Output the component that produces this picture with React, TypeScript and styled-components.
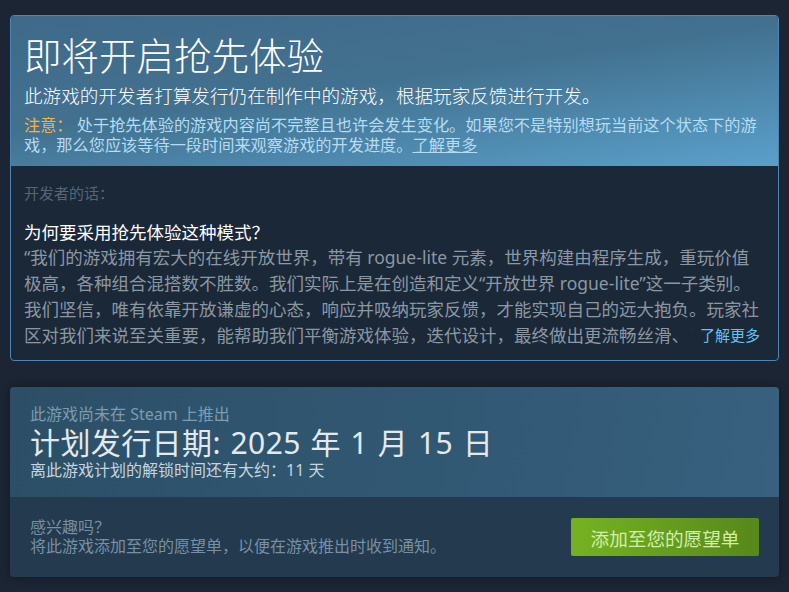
import React from "react";
import styled, { createGlobalStyle } from "styled-components";

const GlobalStyle = createGlobalStyle`
  html, body {
    margin: 0;
    padding: 0;
    background: #1b2534;
  }
  body {
    font-family: "Noto Sans", "Noto Sans CJK SC", sans-serif;
  }
`;

const Page = styled.div`
  width: 789px;
  height: 592px;
  box-sizing: border-box;
  padding: 15px 10px 0 10px;
  display: flex;
  flex-direction: column;
  gap: 26px;
  background: #1b2534;
`;

const EarlyAccessCard = styled.div`
  border: 1px solid #4b86b6;
  border-radius: 4px;
  overflow: hidden;
  background: #1b2838;
`;

const Header = styled.div`
  padding: 18px 14px 11px 13px;
  background: linear-gradient(172deg, #3f6a89 0%, #42718f 45%, #5aa0cb 100%);
`;

const Title = styled.h1`
  margin: 0;
  font-size: 37.5px;
  line-height: 44px;
  font-weight: 300;
  color: #ffffff;
`;

const Subtitle = styled.div`
  margin-top: 6px;
  font-size: 18.6px;
  line-height: 24px;
  font-weight: 300;
  color: #ffffff;
`;

const Note = styled.div`
  margin-top: 7px;
  font-size: 16.2px;
  line-height: 20px;
  color: #b5dcf2;
`;

const Warn = styled.span`
  color: #f3b535;
`;

const InlineLink = styled.a`
  color: #b5dcf2;
  text-decoration: underline;
  cursor: pointer;
`;

const DevSection = styled.div`
  padding: 17px 14px 12px 13px;
`;

const Label = styled.div`
  font-size: 15px;
  line-height: 20px;
  color: #566675;
`;

const Question = styled.div`
  margin-top: 17px;
  font-size: 17.5px;
  line-height: 24px;
  color: #ffffff;
`;

const Body = styled.div`
  position: relative;
  max-height: 104px;
  overflow: hidden;
  font-size: 17.5px;
  line-height: 26px;
  color: #8b97a3;
`;

const ReadMore = styled.a`
  position: absolute;
  right: 4px;
  bottom: 0;
  padding-left: 22px;
  font-size: 15px;
  line-height: 26px;
  color: #66c0f4;
  cursor: pointer;
  background: linear-gradient(to right, rgba(27, 40, 56, 0) 0%, #1b2838 14px);
`;

const ReleaseCard = styled.div`
  border-radius: 4px;
  overflow: hidden;
  box-shadow: 0 0 10px rgba(0, 0, 0, 0.35);
`;

const ReleaseTop = styled.div`
  padding: 17px 20px 17px 20px;
  background: linear-gradient(100deg, #2c4f67 0%, #315873 55%, #37617f 100%);
`;

const Muted = styled.div<{ $color?: string }>`
  font-size: 16px;
  line-height: 20px;
  color: ${(p) => p.$color || "#7e9bb0"};
`;

const DateLine = styled.div`
  margin: 2px 0 0 0;
  font-size: 30px;
  line-height: 34px;
  letter-spacing: 0.4px;
  word-spacing: 1.5px;
  color: #e4e9ed;
`;

const ReleaseBottom = styled.div`
  height: 80px;
  box-sizing: border-box;
  padding: 0 20px;
  display: flex;
  align-items: center;
  justify-content: space-between;
  background: #233a4f;
`;

const WishText = styled.div`
  font-size: 16px;
  line-height: 19px;
  color: #7890a4;
`;

const WishButton = styled.button`
  width: 188px;
  height: 38px;
  border: none;
  border-radius: 2px;
  font-family: inherit;
  font-size: 18.6px;
  color: #d2efa9;
  cursor: pointer;
  background: linear-gradient(to right, #75b022 5%, #588a1b 95%);
`;

export default function App() {
  return (
    <>
      <GlobalStyle />
      <Page>
        <EarlyAccessCard>
          <Header>
            <Title>即将开启抢先体验</Title>
            <Subtitle>此游戏的开发者打算发行仍在制作中的游戏，根据玩家反馈进行开发。</Subtitle>
            <Note>
              <Warn>注意：</Warn> 处于抢先体验的游戏内容尚不完整且也许会发生变化。如果您不是特别想玩当前这个状态下的游戏，那么您应该等待一段时间来观察游戏的开发进度。
              <InlineLink>了解更多</InlineLink>
            </Note>
          </Header>
          <DevSection>
            <Label>开发者的话：</Label>
            <Question>为何要采用抢先体验这种模式？</Question>
            <Body>
              “我们的游戏拥有宏大的在线开放世界，带有 rogue-lite 元素，世界构建由程序生成，重玩价值极高，各种组合混搭数不胜数。我们实际上是在创造和定义“开放世界 rogue-lite”这一子类别。我们坚信，唯有依靠开放谦虚的心态，响应并吸纳玩家反馈，才能实现自己的远大抱负。玩家社区对我们来说至关重要，能帮助我们平衡游戏体验，迭代设计，最终做出更流畅丝滑、更具深度的游戏。”
              <ReadMore>了解更多</ReadMore>
            </Body>
          </DevSection>
        </EarlyAccessCard>

        <ReleaseCard>
          <ReleaseTop>
            <Muted>此游戏尚未在 Steam 上推出</Muted>
            <DateLine>计划发行日期: 2025 年 1 月 15 日</DateLine>
            <Muted $color="#c6d4df">离此游戏计划的解锁时间还有大约：11 天</Muted>
          </ReleaseTop>
          <ReleaseBottom>
            <WishText>
              感兴趣吗？
              <br />
              将此游戏添加至您的愿望单，以便在游戏推出时收到通知。
            </WishText>
            <WishButton>添加至您的愿望单</WishButton>
          </ReleaseBottom>
        </ReleaseCard>
      </Page>
    </>
  );
}
